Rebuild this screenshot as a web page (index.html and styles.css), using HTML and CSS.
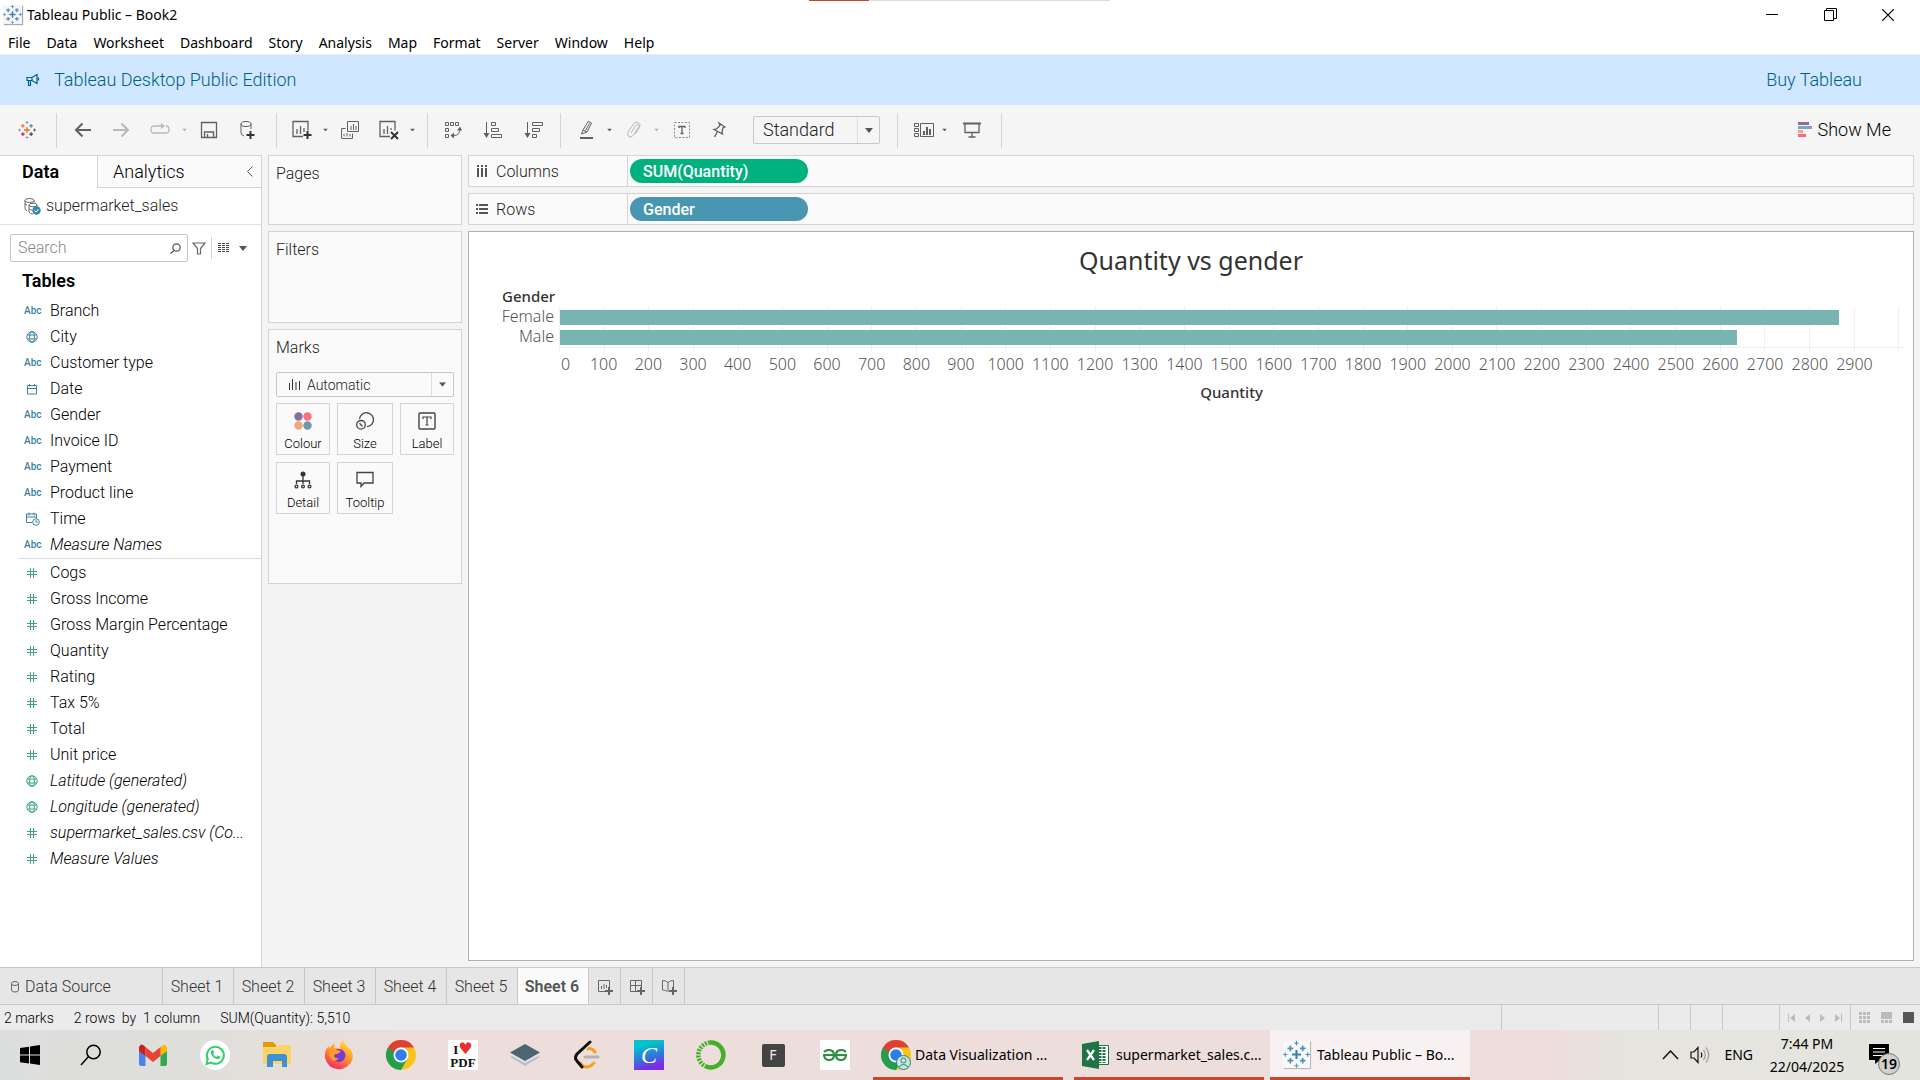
FILE: index.html
```html
<!DOCTYPE html>
<html lang="en">
<head>
<meta charset="utf-8">
<meta name="viewport" content="width=device-width, initial-scale=1">
<title>Tableau Public – Book2</title>
<link rel="stylesheet" href="styles.css">
</head>
<body>
<svg class="sprite" aria-hidden="true">
  <symbol id="i-globe" viewBox="0 0 12 12"><g fill="none" stroke="currentColor"><circle cx="6" cy="6" r="5.2"/><ellipse cx="6" cy="6" rx="2.4" ry="5.2"/><path d="M1.5 4h9M1.5 8h9"/></g></symbol>
  <symbol id="i-date" viewBox="0 0 12 12"><path d="M1.500 2.500h9v8.500h-9zM1.500 5.500h9M3.500 1v2.500M8.500 1v2.500" fill="none" stroke="currentColor"/></symbol>
  <symbol id="i-time" viewBox="0 0 14 14"><g fill="none" stroke="currentColor"><path d="M6 10.500H.5v-8.500h10v4M.5 5h10M3 .5v3M8 .5v3"/><circle cx="10" cy="10" r="3.300"/><path d="M10 8v2.200h1.700"/></g></symbol>
  <symbol id="i-hash" viewBox="0 0 12 12"><path d="M4.500 1v10M7.500 1v10M1 4.500h10M1 7.500h10" fill="none" stroke="currentColor"/></symbol>
  <symbol id="i-caret" viewBox="0 0 8 5"><path d="M0 0h8L4 5z" fill="currentColor"/></symbol>
  <symbol id="i-crosses" viewBox="0 0 24 24"><g fill="none" stroke-width="1.500"><path stroke="var(--c1)" d="M12 8v8M8 12h8" stroke-width="1.800"/><path stroke="var(--c2)" d="M6.500 4v5M4 6.500h5"/><path stroke="var(--c3)" d="M17.500 4v5M15 6.500h5"/><path stroke="var(--c4)" d="M6.500 15v5M4 17.500h5"/><path stroke="var(--c5)" d="M17.500 15v5M15 17.500h5"/><path stroke="var(--c3)" stroke-width="1" d="M12 0v4M10 2h4"/><path stroke="var(--c6)" stroke-width="1" d="M12 20v4M10 22h4M0 12h4M2 10v4"/><path stroke="var(--c5)" stroke-width="1" d="M20 12h4M22 10v4"/></g></symbol>
  <symbol id="i-chrome" viewBox="0 0 30 30"><circle cx="15" cy="15" r="15" fill="#fdc31b"/><path d="M2 7.500a15 15 0 0 0 13 22.500l6.500-11.200L15 15z" fill="#249d50"/><path d="M2 7.500a15 15 0 0 1 26 0H15a7.500 7.500 0 0 0-7 5z" fill="#dd4036"/><circle cx="15" cy="15" r="7.500" fill="#fff"/><circle cx="15" cy="15" r="5.800" fill="#2f7cee"/></symbol>
</svg>

<header class="titlebar">
  <svg class="app-icon mono" viewBox="0 0 24 24"><use href="#i-crosses"/></svg>
  <span class="title">Tableau Public – Book2</span>
  <span class="top-tab"></span>
  <div class="window-controls">
    <button aria-label="Minimise"><svg width="12" height="12"><path d="M0 5.500h12" stroke="#000"/></svg></button>
    <button aria-label="Restore"><svg width="13" height="13" fill="none" stroke="#000"><path d="M.5 2.500h9v10h-9zM2.500 2.500v-2h10v10h-3"/></svg></button>
    <button aria-label="Close"><svg width="12" height="12"><path d="M0 0l12 12M12 0L0 12" stroke="#000" stroke-width="1.200"/></svg></button>
  </div>
</header>
<nav class="menubar">
  <a href="#">File</a><a href="#">Data</a><a href="#">Worksheet</a><a href="#">Dashboard</a><a href="#">Story</a><a href="#">Analysis</a><a href="#">Map</a><a href="#">Format</a><a href="#">Server</a><a href="#">Window</a><a href="#">Help</a>
</nav>

<div class="banner">
  <svg width="14" height="14" viewBox="0 0 14 14" fill="none" stroke="currentColor" stroke-width="1.200"><path d="M1 4.500h5l5-3v9l-5-3H1zM6 4.500v3M2.500 7.500v5h2v-5M12.500 4.500v3"/></svg>
  <span>Tableau Desktop Public Edition</span>
  <a class="buy" href="#">Buy Tableau</a>
</div>

<div class="toolbar">
  <div class="group g-logo"><button aria-label="Start page"><svg class="multi" width="18" height="18" viewBox="0 0 24 24"><use href="#i-crosses"/></svg></button></div>
  <div class="group g-nav">
    <button aria-label="Undo"><svg width="18" height="16" viewBox="0 0 18 16"><path d="M17 8H2M8.500 1.500L2 8l6.500 6.500" stroke-width="2"/></svg></button>
    <button class="off" aria-label="Redo"><svg width="18" height="16" viewBox="0 0 18 16"><path d="M1 8h15M9.500 1.500L16 8l-6.500 6.500" stroke-width="2"/></svg></button>
    <button class="off" aria-label="Replay"><svg width="20" height="14" viewBox="0 0 20 14"><path d="M9 3H4Q1 3 1 6.500T4 10h12q3 0 3-3.500T16 3M9 3h3" stroke-width="1.300"/><path class="solid" d="M11 0l4 3-4 3z"/></svg></button>
    <button class="off caret" aria-label="Replay options"><svg width="5" height="4" viewBox="0 0 8 5"><use href="#i-caret"/></svg></button>
    <button aria-label="Save"><svg width="18" height="18" viewBox="0 0 18 18"><path d="M1.500 1.500h15v15h-15zM4.500 16v-5h9v5M7.500 13v3" stroke-width="1.300"/></svg></button>
    <button aria-label="New data source"><svg width="18" height="20" viewBox="0 0 18 20"><ellipse cx="8" cy="4" rx="5" ry="2.500"/><path d="M3 4v9q0 2 3 3M13 4v5"/><path class="dark" d="M12.500 11v8M8.500 15h8"/></svg></button>
  </div>
  <div class="group g-sheet">
    <button aria-label="New worksheet"><svg width="22" height="20" viewBox="0 0 22 20"><path d="M12 16.500H2v-15h15v9M6 9v5M9.500 6v8M13 8v4" stroke-width="1.300"/><path class="dark" d="M16.500 11v8M12.500 15h8"/></svg></button>
    <button class="caret" aria-label="New worksheet options"><svg width="5" height="4" viewBox="0 0 8 5"><use href="#i-caret"/></svg></button>
    <button aria-label="Duplicate"><svg width="20" height="20" viewBox="0 0 20 20"><path d="M7.500 1.500h11v10h-11zM5.500 8.500h-4v10h11v-5M11 6v4M13.500 4v6M16 6v4M4 14v2.500M7 13v3.500M10 14v2.500"/></svg></button>
    <button aria-label="Clear sheet"><svg width="22" height="20" viewBox="0 0 22 20"><path d="M12 16.500H2v-15h15v9M6 9v5M9.500 6v8M13 8v2" stroke-width="1.300"/><path class="dark" d="M13 12l7 7M20 12l-7 7"/></svg></button>
    <button class="caret" aria-label="Clear options"><svg width="5" height="4" viewBox="0 0 8 5"><use href="#i-caret"/></svg></button>
  </div>
  <div class="group g-sort">
    <button aria-label="Swap rows and columns"><svg width="18" height="18" viewBox="0 0 18 18"><path d="M1.500 1.500h3v3h-3zM6.500 1.500h3v3h-3zM11.500 1.500h3v3h-3zM1.500 7.500h3v3h-3zM1.500 13.500h3v3h-3zM16 7.500q0 7-6 7"/><path class="solid" d="M10 11.500v6L6.500 14.500zM13 9.500l3-4 2 4z"/></svg></button>
    <button aria-label="Sort ascending"><svg width="20" height="18" viewBox="0 0 20 18"><path d="M3.500 1v13M8.500 1.500h4v3h-4zM8.500 7.500h7v3h-7zM8.500 13.500h10v3h-10z"/><path class="solid" d="M.5 12h6l-3 5z"/></svg></button>
    <button aria-label="Sort descending"><svg width="20" height="18" viewBox="0 0 20 18"><path d="M3.500 1v13M8.500 1.500h10v3h-10zM8.500 7.500h7v3h-7zM8.500 13.500h4v3h-4z"/><path class="solid" d="M.5 12h6l-3 5z"/></svg></button>
  </div>
  <div class="group g-format">
    <button aria-label="Highlight"><svg width="16" height="20" viewBox="0 0 16 20"><path d="M4 10l5-8.500 3.500 1.500-4.500 9zM4 10l-1.500 4 5.500-2M6.500 10.500l4-7"/><path d="M1 18h13" stroke-width="2"/></svg></button>
    <button class="caret" aria-label="Highlight options"><svg width="5" height="4" viewBox="0 0 8 5"><use href="#i-caret"/></svg></button>
    <button class="off" aria-label="Group"><svg width="16" height="18" viewBox="0 0 16 18"><path d="M5 12l5-8q1.500-1.500 2.500 0t0 2L7 14.500q-2 2.500-4 1.200T2 11L7.500 3q2.500-3 5-1.500t1 5L9.500 13"/></svg></button>
    <button class="off caret" aria-label="Group options"><svg width="5" height="4" viewBox="0 0 8 5"><use href="#i-caret"/></svg></button>
    <button aria-label="Show mark labels"><svg width="18" height="18" viewBox="0 0 18 18"><path d="M1.500 1.500h15v15h-15z" stroke-dasharray="2 1.500" opacity=".7"/><path d="M6 7V5.500h6V7M9 5.500v7M7.500 12.500h3" stroke-width="1.300"/></svg></button>
    <button aria-label="Fix axes"><svg width="14" height="18" viewBox="0 0 14 18"><path d="M7 2l6 4-2 .7-1 4.300.5 2L2 8.500l2.500-.6L8 4.500zM5.500 10.500L2.500 16" stroke-width="1.300"/></svg></button>
  </div>
  <div class="group g-fit">
    <span class="select zoom-select"><select aria-label="Fit"><option>Standard</option><option>Fit Width</option><option>Entire View</option></select><span class="arrow"><svg width="8" height="5"><use href="#i-caret"/></svg></span></span>
  </div>
  <div class="group g-show">
    <button aria-label="Show cards"><svg width="22" height="16" viewBox="0 0 22 16"><path d="M1.500 1.500h4v3h-4zM1.500 6.500h4v3h-4zM1.500 11.500h4v3h-4zM7.500 1.500h13v13h-13z"/><path d="M11 9v4M14 5v8M17 7v6" stroke-width="2"/></svg></button>
    <button class="caret" aria-label="Show cards options"><svg width="5" height="4" viewBox="0 0 8 5"><use href="#i-caret"/></svg></button>
    <button aria-label="Presentation mode"><svg width="18" height="16" viewBox="0 0 18 16"><path d="M0 1.500h18" stroke-width="2"/><path d="M2 2v8.500h14V2M9 11v4M5.500 15h7" stroke-width="1.300"/></svg></button>
  </div>
  <button class="show-me"><svg width="14" height="16"><path fill="#8b6f99" d="M0 0h11v3H0z"/><path fill="#7fa3cc" d="M0 4h14v3H0z"/><path fill="#f4a57c" d="M0 8h5v3H0z"/><path fill="#f66b7e" d="M0 12h8v3H0z"/></svg>Show Me</button>
</div>

<main class="workspace">
  <aside class="data-pane">
    <div class="pane-tabs"><button class="pane-tab active">Data</button><button class="pane-tab">Analytics<svg width="6" height="11"><path d="M5.500.5l-5 5 5 5" fill="none" stroke="#555"/></svg></button></div>
    <div class="source"><svg width="17" height="17" viewBox="0 0 17 17" fill="none" stroke="#666"><ellipse cx="5.500" cy="2.500" rx="4.500" ry="2"/><path d="M1 2.500v8q0 1.500 2 2M1 6q1 1 2 1M10 2.500v2"/><ellipse cx="9" cy="7" rx="4" ry="1.800"/><path d="M5 7v7q1 2 4 2M13 7v2M5 11q1.500 1 3 1"/><circle cx="12.500" cy="12.500" r="4.200" fill="#3787ab" stroke="none"/><path d="M10.500 12.500l1.500 1.500 2.500-3" stroke="#fff"/></svg><span>supermarket_sales</span></div>
    <div class="search-row">
      <label class="search"><input type="text" placeholder="Search" aria-label="Search"><svg width="11" height="11" fill="none" stroke="#555" stroke-width="1.200"><circle cx="6.500" cy="4.500" r="3.700"/><path d="M4 7.500L.5 10.500"/></svg></label>
      <button aria-label="Filter"><svg width="14" height="13" fill="none" stroke="#666" stroke-width="1.200"><path d="M1 1h12L8.500 6.500V12h-3V6.500z"/></svg></button>
      <button class="view" aria-label="View"><svg width="12" height="10" stroke="#444" stroke-dasharray="3 1"><path d="M0 .5h12M0 2.500h12M0 4.500h12M0 6.500h12M0 8.500h12"/></svg><svg class="dd" width="8" height="5"><use href="#i-caret"/></svg></button>
    </div>
    <h2>Tables</h2>
    <ul class="fields dims">
      <li><i class="abc">Abc</i><span>Branch</span></li>
      <li><i><svg width="12" height="12"><use href="#i-globe"/></svg></i><span>City</span></li>
      <li><i class="abc">Abc</i><span>Customer type</span></li>
      <li><i><svg width="12" height="12"><use href="#i-date"/></svg></i><span>Date</span></li>
      <li><i class="abc">Abc</i><span>Gender</span></li>
      <li><i class="abc">Abc</i><span>Invoice ID</span></li>
      <li><i class="abc">Abc</i><span>Payment</span></li>
      <li><i class="abc">Abc</i><span>Product line</span></li>
      <li><i><svg width="14" height="14"><use href="#i-time"/></svg></i><span>Time</span></li>
      <li><i class="abc">Abc</i><span class="gen">Measure Names</span></li>
    </ul>
    <ul class="fields measures">
      <li><i><svg width="12" height="12"><use href="#i-hash"/></svg></i><span>Cogs</span></li>
      <li><i><svg width="12" height="12"><use href="#i-hash"/></svg></i><span>Gross Income</span></li>
      <li><i><svg width="12" height="12"><use href="#i-hash"/></svg></i><span>Gross Margin Percentage</span></li>
      <li><i><svg width="12" height="12"><use href="#i-hash"/></svg></i><span>Quantity</span></li>
      <li><i><svg width="12" height="12"><use href="#i-hash"/></svg></i><span>Rating</span></li>
      <li><i><svg width="12" height="12"><use href="#i-hash"/></svg></i><span>Tax 5%</span></li>
      <li><i><svg width="12" height="12"><use href="#i-hash"/></svg></i><span>Total</span></li>
      <li><i><svg width="12" height="12"><use href="#i-hash"/></svg></i><span>Unit price</span></li>
      <li><i><svg width="12" height="12"><use href="#i-globe"/></svg></i><span class="gen">Latitude (generated)</span></li>
      <li><i><svg width="12" height="12"><use href="#i-globe"/></svg></i><span class="gen">Longitude (generated)</span></li>
      <li><i><svg width="12" height="12"><use href="#i-hash"/></svg></i><span class="gen">supermarket_sales.csv (Co...</span></li>
      <li><i><svg width="12" height="12"><use href="#i-hash"/></svg></i><span class="gen">Measure Values</span></li>
    </ul>
  </aside>

  <section class="cards">
    <div class="card pages"><h3>Pages</h3></div>
    <div class="card filters"><h3>Filters</h3></div>
    <div class="card marks"><h3>Marks</h3>
      <span class="select mark-select"><svg class="bars-icon" width="11" height="13" stroke="#333"><path d="M.5 5v7M3.500 1v11M7 4v8M10.500 3v9"/></svg><select aria-label="Mark type"><option>Automatic</option><option>Bar</option><option>Line</option></select><span class="arrow"><svg width="7" height="5" viewBox="0 0 8 5"><use href="#i-caret"/></svg></span></span>
      <div class="mark-grid">
        <button><svg width="18" height="18"><circle cx="4.500" cy="4.500" r="4.200" fill="#876f9b"/><circle cx="13.500" cy="4.500" r="4.200" fill="#fa6f80"/><circle cx="4.500" cy="13.500" r="4.200" fill="#f5a579"/><circle cx="13.500" cy="13.500" r="4.200" fill="#6b9aa6"/></svg>Colour</button>
        <button><svg width="18" height="18" fill="none" stroke="#444" stroke-width="1.300"><path d="M3.500 7A7 7 0 1 1 11 14.700"/><circle cx="5" cy="12.800" r="4.300"/><path d="M3.500 11.300l3 3"/></svg>Size</button>
        <button><svg width="18" height="18" fill="none" stroke="#444" stroke-width="1.400"><rect x="1" y="1" width="16" height="16" rx="1"/><path d="M5 7V5h8v2M9 5v8M7.500 13h3" stroke-width="1.200"/></svg>Label</button>
        <button><svg width="18" height="18" fill="none" stroke="#333" stroke-width="1.300"><circle cx="9" cy="3" r="2.500" fill="#333" stroke="none"/><path d="M9 3v10M2.500 13v-3h13v3"/><circle cx="2.500" cy="15.500" r="1.400"/><circle cx="9" cy="15.500" r="1.400"/><circle cx="15.500" cy="15.500" r="1.400"/></svg>Detail</button>
        <button><svg width="18" height="18" fill="none" stroke="#444" stroke-width="1.300"><path d="M1 1.500h16v10.500H8l-3 3.500V12H1z"/></svg>Tooltip</button>
      </div>
    </div>
  </section>

  <section class="canvas">
    <div class="shelf"><div class="shelf-name"><svg width="12" height="13" fill="#555"><path d="M1 0h2v2H1zM5 0h2v2H5zM9 0h2v2H9zM1 3h2v9H1zM5 3h2v9H5zM9 3h2v9H9z"/></svg><span>Columns</span></div><button class="pill green">SUM(Quantity)</button></div>
    <div class="shelf"><div class="shelf-name"><svg width="12" height="13" fill="#555"><path d="M0 1h2v2H0zM3 1h9v2H3zM0 5h2v2H0zM3 5h9v2H3zM0 9h2v2H0zM3 9h9v2H3z"/></svg><span>Rows</span></div><button class="pill blue">Gender</button></div>
    <div class="sheet">
      <h1>Quantity vs gender</h1>
      <div class="chart">
        <div class="row-head">Gender</div>
        <div class="row-labels"><span>Female</span><span>Male</span></div>
        <div class="plot">
          <div class="gridlines"><b></b><b></b><b></b><b></b><b></b><b></b><b></b><b></b><b></b><b></b><b></b><b></b><b></b><b></b><b></b><b></b><b></b><b></b><b></b><b></b><b></b><b></b><b></b><b></b><b></b><b></b><b></b><b></b><b></b><b></b><b></b></div>
          <div class="bars"><div class="bar" style="width:95.2%"></div><div class="bar" style="width:87.6%"></div></div>
        </div>
        <div class="ticks"><span>0</span><span>100</span><span>200</span><span>300</span><span>400</span><span>500</span><span>600</span><span>700</span><span>800</span><span>900</span><span>1000</span><span>1100</span><span>1200</span><span>1300</span><span>1400</span><span>1500</span><span>1600</span><span>1700</span><span>1800</span><span>1900</span><span>2000</span><span>2100</span><span>2200</span><span>2300</span><span>2400</span><span>2500</span><span>2600</span><span>2700</span><span>2800</span><span>2900</span><span></span></div>
        <div class="axis-title">Quantity</div>
      </div>
    </div>
  </section>
</main>

<nav class="sheet-tabs">
  <button class="data-source"><svg width="8" height="12" fill="none" stroke="#666"><ellipse cx="4" cy="2.500" rx="3.500" ry="2"/><path d="M.5 2.500v6.500q0 2 3.500 2t3.500-2V2.500"/></svg>Data Source</button>
  <button>Sheet 1</button><button>Sheet 2</button><button>Sheet 3</button><button>Sheet 4</button><button>Sheet 5</button><button class="active">Sheet 6</button>
  <button class="add" aria-label="New worksheet"><svg width="16" height="16" fill="none" stroke="#666"><path d="M9 12.500H1.500v-11h11V8M4.500 7v3M7 5v5M9.500 6v3"/><path d="M12 8v8M8 12h8" stroke-width="2"/></svg></button>
  <button class="add" aria-label="New dashboard"><svg width="16" height="16" fill="none" stroke="#666"><path d="M9 12.500H1.500v-11h11V8M6.500 1.500v11M1.500 6.500h11"/><path d="M12 8v8M8 12h8" stroke-width="2"/></svg></button>
  <button class="add" aria-label="New story"><svg width="16" height="16" fill="none" stroke="#666"><path d="M7 3.500q-2-2-5.500-2v9.500q3 0 5 1.500M7 3.500q2-2 5.500-2V8M7 3.500v9"/><path d="M12 8v8M8 12h8" stroke-width="2"/></svg></button>
</nav>

<div class="status">
  <span class="s-marks">2 marks</span><span>2 rows&nbsp; by&nbsp; 1 column</span><span>SUM(Quantity): 5,510</span>
  <div class="cells"><b class="c1"></b><b class="c2"></b><b class="c2"></b><b class="c3"></b>
    <div class="pager">
      <svg width="7" height="8"><path d="M0 0h1v8H0zM7 0v8L2 4z"/></svg><svg width="5" height="8"><path d="M5 0v8L0 4z"/></svg><svg width="5" height="8"><path d="M0 0v8l5-4z"/></svg><svg width="7" height="8"><path d="M6 0h1v8H6zM0 0v8l5-4z"/></svg>
    </div>
    <div class="views">
      <svg width="11" height="11"><path d="M0 0h3v3H0zM4 0h3v3H4zM8 0h3v3H8zM0 4h3v3H0zM4 4h3v3H4zM8 4h3v3H8zM0 8h3v3H0zM4 8h3v3H4zM8 8h3v3H8z"/></svg><svg width="11" height="11"><path d="M0 0h11v7H0zM0 8h3v3H0zM4 8h3v3H4zM8 8h3v3H8z"/></svg><svg width="11" height="11"><path fill="#555" d="M0 0h11v11H0z"/></svg>
    </div>
  </div>
</div>

<footer class="taskbar">
  <div class="launchers">
    <button aria-label="Start"><svg width="20" height="20"><path d="M0 3l9-1.300V9.500H0zM10 1.500L20 0v9.500H10zM0 10.500h9v8L0 17.200zM10 10.500h10V20l-10-1.500z"/></svg></button>
    <button aria-label="Search"><svg width="22" height="22" fill="none" stroke="#000" stroke-width="1.500"><circle cx="13.500" cy="8" r="6.700"/><path d="M8.500 12.500L1 21"/></svg></button>
    <button aria-label="Gmail"><svg width="28" height="22" viewBox="0 0 28 22"><path fill="#4a82ee" d="M0 5l6.500 5v12H2q-2 0-2-2z"/><path fill="#33a853" d="M28 5l-6.500 5v12H26q2 0 2-2z"/><path fill="#fcbc05" d="M21.500 3q4-4 6.500 0v4l-6.500 5z"/><path fill="#c5221f" d="M6.500 3Q2-2 0 3v4l6.500 5z"/><path fill="#ea4335" d="M6.500 3L14 9l7.500-6v9L14 18l-7.500-6z"/></svg></button>
    <button aria-label="WhatsApp"><svg width="30" height="30"><circle cx="15" cy="15" r="15" fill="#fff"/><path d="M6.500 24l1.300-4.800A8.500 8.500 0 1 1 11 22.600z" fill="none" stroke="#35cf6a" stroke-width="2"/><path d="M11.500 10.500q1.500-1.500 2 .5l.6 1.600-1 1.300q1 2 3.200 3l1.400-1.300 2.300 1q.7 1-1 2.200-2.200 1.200-5.400-1.300-4-3.500-2.100-7z" fill="#35cf6a"/></svg></button>
    <button aria-label="File Explorer"><svg width="28" height="26"><path fill="#dc9a0d" d="M0 0h10l3 3v5H0z"/><path fill="#fdd368" d="M0 5h13l2-2h13v19H0z"/><path fill="#3c92d4" d="M4 25V15q0-3 3-3h14q3 0 3 3v10h-5v-6h-9v6z"/></svg></button>
    <button aria-label="Firefox"><svg width="30" height="30"><defs><linearGradient id="ff" x1=".8" y1="0" x2=".3" y2="1"><stop offset="0" stop-color="#ffe54a"/><stop offset=".5" stop-color="#ff9526"/><stop offset="1" stop-color="#f5246c"/></linearGradient></defs><path fill="url(#ff)" d="M19 0q1 4 5 7 6 5 4.500 12A14.200 14.200 0 0 1 1 18Q0 10 5 6v3q3-5 6-5l-1 4q4-1 6 1Q15 4 19 0z"/><circle cx="15" cy="15.500" r="6.500" fill="#7a37d6"/><path fill="#ff9b28" d="M5 10q4-2 8 0l4 1q-1 2-4 3-3 0-3 2 1 3 5 2-3 4-7 2-4-4-3-10z"/></svg></button>
    <button aria-label="Chrome"><svg width="30" height="30"><use href="#i-chrome"/></svg></button>
    <button aria-label="iLovePDF"><span class="ilp"><span>I<em>♥</em></span><span>PDF</span></span></button>
    <button aria-label="Stack"><svg width="30" height="22"><path fill="#b8c2c6" d="M0 13l15-8 15 8-15 9z"/><path fill="#e8e0df" d="M0 11l15 8 15-8-15-5z"/><path fill="#4e6470" d="M15 0l15 8.500L15 17 0 8.500z"/></svg></button>
    <button aria-label="LeetCode"><svg width="26" height="30" fill="none" stroke-width="3" stroke-linecap="round"><path stroke="#f7a11b" d="M14 9q3-2 7 3M6 23q6 8 14 0"/><path stroke="#111" d="M16 2L3 14q-3 4 0 7l5 6"/><path stroke="#b3b3b3" d="M11 17h13"/></svg></button>
    <button aria-label="Canva"><span class="canva">C</span></button>
    <button aria-label="Anaconda"><svg width="30" height="30" fill="none" stroke="#43b02a"><path stroke-width="4.500" d="M14 2.500a12.500 12.500 0 1 1-5 23.500"/><path stroke-width="4.500" stroke-dasharray="2 1.200" d="M14 2.500a12.500 12.500 0 0 0-5 23.500"/></svg></button>
    <button aria-label="F"><span class="fbox">F</span></button>
    <button aria-label="GeeksforGeeks"><span class="gfg"><svg width="26" height="12" fill="none" stroke="#2f8d46" stroke-width="2.200"><path d="M1 6h24M2 3q2-2 4.500-2Q12 1 12 6q0 5-5 5-4.500 0-5-5M24 3q-2-2-4.500-2Q14 1 14 6q0 5 5 5 4.500 0 5-5"/></svg></span></button>
  </div>
  <button class="task t1"><svg width="30" height="30"><use href="#i-chrome"/><circle cx="22.500" cy="22.500" r="7" fill="#c8e5de" stroke="#2d8073"/><circle cx="22.500" cy="20.500" r="2.500" fill="none" stroke="#2d8073"/><path d="M18 27q4.500-5 9 0" fill="none" stroke="#2d8073"/></svg><span>Data Visualization ...</span></button>
  <button class="task t2"><svg width="28" height="28"><path fill="#fff" stroke="#1f7345" d="M14 4.500h12.500v19H14z"/><path d="M18 6v16M22 6v16" stroke="#1f7345" stroke-width="3" stroke-dasharray="2 1"/><path fill="#1f7345" d="M0 3l17-3v28L0 25z"/><path d="M5 9l7 10M12 9L5 19" stroke="#fff" stroke-width="2.200"/></svg><span>supermarket_sales.c...</span></button>
  <button class="task t3"><span class="tab-ico"><svg class="mono" width="27" height="27" viewBox="0 0 24 24"><use href="#i-crosses"/></svg></span><span>Tableau Public – Bo...</span></button>
  <div class="tray">
    <svg width="17" height="10" fill="none" stroke="#111" stroke-width="1.500"><path d="M1 9l7.500-8L16 9"/></svg>
    <svg class="speaker" width="20" height="18" fill="none" stroke="#111" stroke-width="1.200"><path d="M1 6h3l4-4.500v15L4 12H1zM11 6.500q1.500 2.500 0 5"/><path stroke="#999" d="M13.500 4q3.500 5 0 10M16 1.500q5.500 7.500 0 15"/></svg>
    <span class="lang">ENG</span>
    <time><span>7:44 PM</span><span>22/04/2025</span></time>
    <span class="note"><svg width="20" height="20"><path d="M0 0h20v16h-9l-5 4v-4H0z"/><path d="M4 4.500h12M4 8h12M4 11.500h12" stroke="#fff"/></svg><span class="badge">19</span></span>
  </div>
</footer>
</body>
</html>
```
FILE: styles.css
```css
* { box-sizing: border-box; }
:root { --line: #d4d4d4; --ui: Roboto, "Liberation Sans", sans-serif; --win: "Noto Sans", "Open Sans", sans-serif; }
body { margin: 0; min-height: 100vh; display: flex; flex-direction: column; background: #fff; color: #000; font: 300 16px/20px var(--ui); overflow-x: hidden; }
button { font: inherit; color: inherit; background: none; border: 0; padding: 0; cursor: pointer; }
a { color: inherit; text-decoration: none; }
h1, h2, h3, ul { margin: 0; padding: 0; font-weight: 300; }
svg { display: block; flex: none; }
.sprite { position: absolute; width: 0; height: 0; }
.mono { --c1: #3a7fb0; --c2: #4a90b8; --c3: #4a90b8; --c4: #4a90b8; --c5: #4a90b8; --c6: #5b9bc0; }
.multi { --c1: #e8762c; --c2: #e8762c; --c3: #5b879b; --c4: #c72035; --c5: #1f457e; --c6: #7099a6; }

.titlebar { display: flex; align-items: center; height: 29px; padding: 0 3px; font: 14px/20px var(--win); }
.app-icon { width: 19px; height: 19px; background: #f5f5f5; box-shadow: 1px 1px 1px #aaa; }
.title { margin-left: 5px; }
.top-tab { position: absolute; top: 0; left: 809px; width: 301px; height: 1px; background: linear-gradient(90deg, #d0402a 60px, #ddd 60px); }
.window-controls { display: flex; margin-left: auto; }
.window-controls button { display: grid; place-items: center; width: 58px; height: 28px; }
.menubar { display: flex; gap: 16px; height: 26px; padding: 4px 8px 0; border-bottom: 1px solid #ececec; font: 14px/20px var(--win); }

.banner { display: flex; align-items: center; height: 50px; padding: 0 58px 0 26px; background: #cfe8ff; color: #00608c; font-size: 18px; }
.banner span { margin-left: 14px; }
.buy { margin-left: auto; }

.toolbar { display: flex; align-items: center; height: 50px; background: #f5f5f5; color: #606060; padding-right: 29px; }
.group { display: flex; align-items: center; height: 35px; border-right: 1px solid var(--line); }
.group svg { fill: none; stroke: currentColor; }
.group svg .solid, .caret svg { fill: currentColor; stroke: none; }
.group svg .dark { stroke: #333; stroke-width: 2; }
.off { color: #b8b8b8; }
.g-logo { padding-left: 18px; width: 57px; }
.g-nav { padding-left: 17px; width: 220px; gap: 20px; }
.g-nav .caret { margin: 0 -7px 0 -8px; }
.g-sheet { padding-left: 14px; width: 151px; gap: 18px; }
.g-sheet .caret { margin: 0 -6px 0 -8px; }
.g-sort { padding-left: 16px; width: 133px; gap: 21px; }
.g-format { padding-left: 18px; width: 180px; gap: 21px; border: 0; }
.g-format .caret { margin: 0 -7px 0 -9px; }
.g-fit { padding-left: 12px; width: 157px; }
.g-show { padding-left: 15px; width: 104px; gap: 16px; }
.g-show .caret { margin: 0 0 0 -9px; }
.show-me { display: flex; align-items: center; gap: 6px; margin-left: auto; color: #000; font-size: 18px; }
.select { display: grid; align-items: stretch; border: 1px solid #c8c8c8; border-radius: 2px; }
.select > * { grid-area: 1 / 1; }
.select select { appearance: none; border: 0; background: none; font: inherit; color: #222; padding: 0; outline: 0; }
.select .arrow { justify-self: end; display: grid; place-items: center; border-left: 1px solid #dedede; color: #555; pointer-events: none; }
.select .arrow svg { fill: currentColor; stroke: none; }
.zoom-select { width: 127px; height: 28px; font-size: 18px; }
.zoom-select select { padding-left: 9px; }
.zoom-select .arrow { width: 22px; }

.workspace { flex: 1; display: flex; gap: 6px; background: #f4f4f4; padding-right: 6px; }
.data-pane { width: 262px; background: #fff; border-right: 1px solid var(--line); border-top: 1px solid var(--line); flex: none; }
.pane-tabs { display: flex; height: 32px; font-size: 18px; }
.pane-tab { padding-left: 22px; width: 97px; text-align: left; font-weight: 600; }
.pane-tab + .pane-tab { flex: 1; display: flex; align-items: center; justify-content: space-between; padding: 0 8px 0 15px; font-weight: 300; background: #fafafa; border: solid var(--line); border-width: 0 0 1px 1px; }
.source { display: flex; align-items: center; gap: 5px; height: 37px; padding-left: 24px; border-bottom: 1px solid #e0e0e0; color: #222; }
.search-row { display: flex; align-items: center; height: 28px; margin: 9px 0 0 10px; }
.search { display: flex; align-items: center; width: 178px; height: 28px; border: 1px solid #c6c6c6; border-radius: 2px; padding: 0 6px 0 7px; margin-right: 4px; }
.search input { flex: 1; min-width: 0; border: 0; padding: 0; outline: 0; font: inherit; }
.search input::placeholder { color: #888; opacity: 1; }
.view { display: flex; align-items: center; gap: 9px; height: 22px; margin-left: 5px; padding-left: 6px; border-left: 1px solid var(--line); color: #555; }
.data-pane h2 { font-size: 18px; line-height: 24px; font-weight: 600; margin: 7px 0 5px 22px; }
.fields { list-style: none; margin-left: 18px; }
.fields li { display: flex; align-items: center; height: 26px; }
.fields i { width: 32px; padding-left: 8px; flex: none; font-style: normal; }
.fields .abc { padding-left: 6px; font: 500 10px/12px var(--ui); }
.fields span { white-space: nowrap; }
.dims { border-bottom: 1px solid #dcdcdc; }
.dims i { color: #3b82a0; }
.measures { padding-top: 1px; }
.measures i { color: #3aa57c; }
.gen { font-style: italic; }

.cards { width: 194px; flex: none; display: flex; flex-direction: column; gap: 6px; }
.card { background: #fafafa; border: 1px solid var(--line); padding: 8px 7px; }
.card h3 { font-size: 16px; line-height: 20px; color: #222; }
.pages { height: 70px; }
.filters { height: 92px; }
.marks { height: 255px; }
.mark-select { height: 25px; margin-top: 14px; font-size: 14px; }
.mark-select select { padding-left: 30px; }
.mark-select .arrow { width: 22px; }
.bars-icon { align-self: center; margin-left: 12px; }
.mark-grid { display: grid; grid-template-columns: 54px 56px 54px; justify-content: space-between; gap: 7px 0; margin-top: 6px; }
.mark-grid button { display: flex; flex-direction: column; align-items: center; gap: 6px; height: 52px; padding-top: 8px; border: 1px solid var(--line); font-size: 13px; line-height: 16px; }

.canvas { flex: 1; min-width: 0; display: flex; flex-direction: column; gap: 6px; padding-bottom: 6px; }
.shelf { display: flex; align-items: center; height: 32px; background: #fafafa; border: 1px solid var(--line); }
.shelf-name { display: flex; align-items: center; gap: 8px; align-self: stretch; width: 159px; padding-left: 7px; border-right: 1px solid var(--line); color: #222; }
.shelf-name span, .pill { line-height: 22px; padding-top: 2px; }
.pill { width: 178px; height: 24px; margin-left: 2px; padding-left: 13px; border-radius: 12px; text-align: left; color: #fff; font-weight: 500; }
.green { background: #00b180; }
.blue { background: #4996b2; }
.sheet { flex: 1; border: 1px solid #b0b0b0; background: #fff; padding: 11px 9px 0 24px; font: 300 15px/20px "Noto Sans", sans-serif; }
.sheet h1 { font-size: 25px; line-height: 34px; font-weight: 400; text-align: center; color: #333; padding-right: 15px; }
.chart { display: grid; grid-template-columns: 66px 1fr; margin-top: 9px; }
.row-head { grid-column: 1 / 3; color: #333; font-weight: 500; padding-left: 9px; }
.row-labels { display: flex; flex-direction: column; text-align: right; padding-right: 5px; color: #555; font-size: 16px; }
.plot { display: grid; margin-top: 1px; }
.plot > * { grid-area: 1 / 1; }
.gridlines { display: flex; height: 45px; background: linear-gradient(#f0f0f0, #f0f0f0) 0 40px / 100% 1px no-repeat; }
.gridlines b { flex: 100 0 0; border-left: 1px solid #f0f0f0; }
.gridlines b:last-child { flex-grow: 11; }
.bars { display: flex; flex-direction: column; gap: 5px; padding: 3px 0 0 1px; }
.bar { height: 15px; background: #78b5b0; }
.ticks { grid-column: 2; display: flex; margin-top: 2px; color: #555; font-size: 16px; }
.ticks span { flex: 100 0 0; text-align: center; min-width: 0; }
.ticks span:first-child { flex-grow: 50; text-align: left; text-indent: 2px; }
.ticks span:last-child { flex-grow: 61; }
.axis-title { grid-column: 2; text-align: center; color: #333; font-weight: 500; margin-top: 8px; }

.sheet-tabs { display: flex; height: 38px; background: #e6e6e6; border: solid #c8c8c8; border-width: 1px 0; color: #333; }
.sheet-tabs button { width: 71px; border-right: 1px solid #c8c8c8; padding: 2px 2px 0 0; }
.sheet-tabs .data-source { display: flex; align-items: center; gap: 6px; width: 163px; padding-left: 11px; }
.sheet-tabs .active { background: #fafafa; font-weight: 600; color: #555; }
.sheet-tabs .add { width: 32px; display: grid; place-items: center; padding-right: 0; }
.status { display: flex; align-items: center; height: 25px; padding-left: 4px; background: #ebebeb; font-size: 14px; gap: 20px; }
.cells { display: flex; align-self: stretch; margin-left: auto; fill: #bbb; }
.cells > * { border-left: 1px solid #c8c8c8; }
.c1 { width: 157px; } .c2 { width: 32px; } .c3 { width: 57px; }
.pager, .views { display: flex; align-items: center; justify-content: space-between; padding: 0 8px; width: 71px; }
.views { padding: 0 6px 0 8px; width: 70px; }

.taskbar { display: flex; height: 50px; font: 14px/20px var(--win); background: linear-gradient(90deg, #dcdedd 0, #dfdfdb 180px, #ecdedb 420px, #eddedb 1560px, #e6e4df 1620px, #e4e4de 100%); }
.launchers { display: flex; width: 873px; }
.launchers button { width: 62px; flex: none; display: grid; place-items: center; }
.launchers button:first-child { width: 60px; }
.ilp, .canva, .gfg, .fbox { display: grid; width: 30px; height: 30px; background: #fff; place-items: center; }
.ilp { font: 700 13px/13px "Liberation Serif", serif; align-content: center; color: #111; }
.ilp em { color: #e5322d; font: 16px/13px "DejaVu Sans", sans-serif; }
.canva { background: linear-gradient(165deg, #00c4cc 20%, #3a6be0 60%, #7d2ae8 85%); color: #fff; font: italic 24px/28px "Liberation Serif", serif; }
.fbox { width: 23px; height: 23px; border-radius: 2px; background: #444; color: #eee; }
.task { display: flex; align-items: center; flex: none; border-bottom: 3px solid #cf432b; gap: 4px; padding: 2px 8px 0; width: 190px; white-space: nowrap; }
.t2 { margin: 0 6px 0 11px; gap: 6px; }
.t3 { background: #f7f2f1; width: 200px; padding-left: 13px; gap: 7px; }
.tab-ico { background: #f8f8f8; box-shadow: 1px 1px 1px #bbb; }
.tray { display: flex; align-items: center; margin-left: auto; padding-right: 18px; }
.speaker { margin: 0 14px 0 11px; }
.tray time { display: flex; flex-direction: column; align-items: center; gap: 3px; width: 76px; margin: 0 24px 0 16px; }
.note { position: relative; width: 33px; padding-bottom: 3px; }
.badge { position: absolute; left: 9px; top: 9px; width: 22px; height: 22px; border: 1px solid #777; border-radius: 11px; background: #d0d0ce; text-align: center; font-weight: 600; }
```
